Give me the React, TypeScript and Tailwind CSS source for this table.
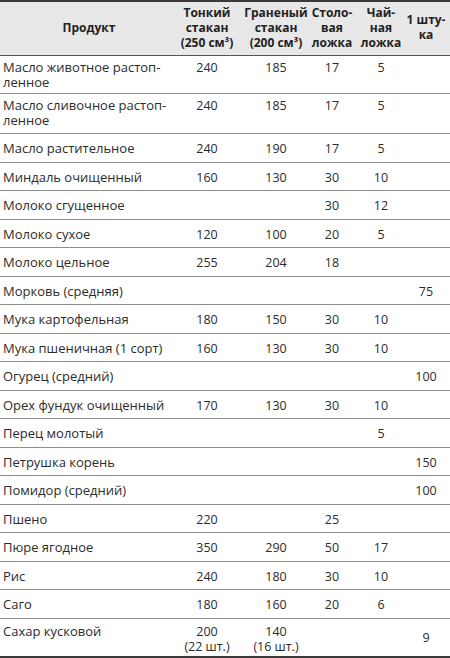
const rows: { name: string[]; cells: string[][]; h: string; pt: string; lastMid?: boolean }[] = [
  { name: ["Масло животное растоп-", "ленное"], cells: [["240"], ["185"], ["17"], ["5"], []], h: "h-[38px]", pt: "pt-[4px]" },
  { name: ["Масло сливочное растоп-", "ленное"], cells: [["240"], ["185"], ["17"], ["5"], []], h: "h-[40px]", pt: "pt-[4px]" },
  { name: ["Масло растительное"], cells: [["240"], ["190"], ["17"], ["5"], []], h: "h-[28.5px]", pt: "pt-[7px]" },
  { name: ["Миндаль очищенный"], cells: [["160"], ["130"], ["30"], ["10"], []], h: "h-[28.5px]", pt: "pt-[7px]" },
  { name: ["Молоко сгущенное"], cells: [[], [], ["30"], ["12"], []], h: "h-[28.5px]", pt: "pt-[7px]" },
  { name: ["Молоко сухое"], cells: [["120"], ["100"], ["20"], ["5"], []], h: "h-[28.5px]", pt: "pt-[7px]" },
  { name: ["Молоко цельное"], cells: [["255"], ["204"], ["18"], [], []], h: "h-[28.5px]", pt: "pt-[7px]" },
  { name: ["Морковь (средняя)"], cells: [[], [], [], [], ["75"]], h: "h-[28.5px]", pt: "pt-[7px]" },
  { name: ["Мука картофельная"], cells: [["180"], ["150"], ["30"], ["10"], []], h: "h-[28.5px]", pt: "pt-[7px]" },
  { name: ["Мука пшеничная (1 сорт)"], cells: [["160"], ["130"], ["30"], ["10"], []], h: "h-[28.5px]", pt: "pt-[7px]" },
  { name: ["Огурец (средний)"], cells: [[], [], [], [], ["100"]], h: "h-[28.5px]", pt: "pt-[7px]" },
  { name: ["Орех фундук очищенный"], cells: [["170"], ["130"], ["30"], ["10"], []], h: "h-[28.5px]", pt: "pt-[7px]" },
  { name: ["Перец молотый"], cells: [[], [], [], ["5"], []], h: "h-[28.5px]", pt: "pt-[7px]" },
  { name: ["Петрушка корень"], cells: [[], [], [], [], ["150"]], h: "h-[28.5px]", pt: "pt-[7px]" },
  { name: ["Помидор (средний)"], cells: [[], [], [], [], ["100"]], h: "h-[28.5px]", pt: "pt-[7px]" },
  { name: ["Пшено"], cells: [["220"], [], ["25"], [], []], h: "h-[28.5px]", pt: "pt-[7px]" },
  { name: ["Пюре ягодное"], cells: [["350"], ["290"], ["50"], ["17"], []], h: "h-[28.5px]", pt: "pt-[7px]" },
  { name: ["Рис"], cells: [["240"], ["180"], ["30"], ["10"], []], h: "h-[28.5px]", pt: "pt-[7px]" },
  { name: ["Саго"], cells: [["180"], ["160"], ["20"], ["6"], []], h: "h-[28.5px]", pt: "pt-[7px]" },
  {
    name: ["Сахар кусковой"],
    cells: [["200", "(22 шт.)"], ["140", "(16 шт.)"], [], [], ["9"]],
    h: "h-[37px]",
    pt: "pt-[5px]",
    lastMid: true,
  },
];

const grid = "grid grid-cols-[178px_58px_80px_32px_66px_24px]";

function Lines({ lines }: { lines: string[] }) {
  return (
    <>
      {lines.map((l, i) => (
        <div key={i} className="whitespace-nowrap">
          {l}
        </div>
      ))}
    </>
  );
}

export default function App() {
  return (
    <div className="w-[450px] h-[658px] bg-white" style={{ fontFamily: '"Open Sans", "Noto Sans", sans-serif' }}>
      <div className="border-t-2 border-b-2 border-[#3a3a3a]">
        {/* header */}
        <div className={`${grid} h-[54px] pb-[3px] bg-[#e8e8e8] border-b border-[#555] text-[12px] leading-[15px] font-bold text-[#222]`}>
          <div className="flex items-center justify-center">Продукт</div>
          <div className="flex items-center justify-center text-center">
            <div>
              <Lines lines={["Тонкий", "стакан", "(250 см³)"]} />
            </div>
          </div>
          <div className="flex items-center justify-center text-center">
            <div>
              <Lines lines={["Граненый", "стакан", "(200 см³)"]} />
            </div>
          </div>
          <div className="flex items-center justify-center text-center">
            <div>
              <Lines lines={["Столо-", "вая", "ложка"]} />
            </div>
          </div>
          <div className="flex items-center justify-center text-center">
            <div>
              <Lines lines={["Чай-", "ная", "ложка"]} />
            </div>
          </div>
          <div className="flex items-center justify-center text-center">
            <div>
              <Lines lines={["1 шту-", "ка"]} />
            </div>
          </div>
        </div>

        {rows.map((r, i) => (
          <div
            key={i}
            className={`${grid} ${r.h} leading-[15px] text-[#2b2b2b] ${
              i < rows.length - 1 ? "border-b border-[#8f8f8f]" : ""
            }`}
          >
            <div className={`${r.pt} pl-[3px] text-[13px]`}>
              <Lines lines={r.name} />
            </div>
            {r.cells.map((c, j) => (
              <div
                key={j}
                className={`flex justify-center text-center text-[12.5px] ${
                  r.lastMid && j === 4 ? "items-center" : r.pt
                }`}
              >
                <div>
                  <Lines lines={c} />
                </div>
              </div>
            ))}
          </div>
        ))}
      </div>
    </div>
  );
}
